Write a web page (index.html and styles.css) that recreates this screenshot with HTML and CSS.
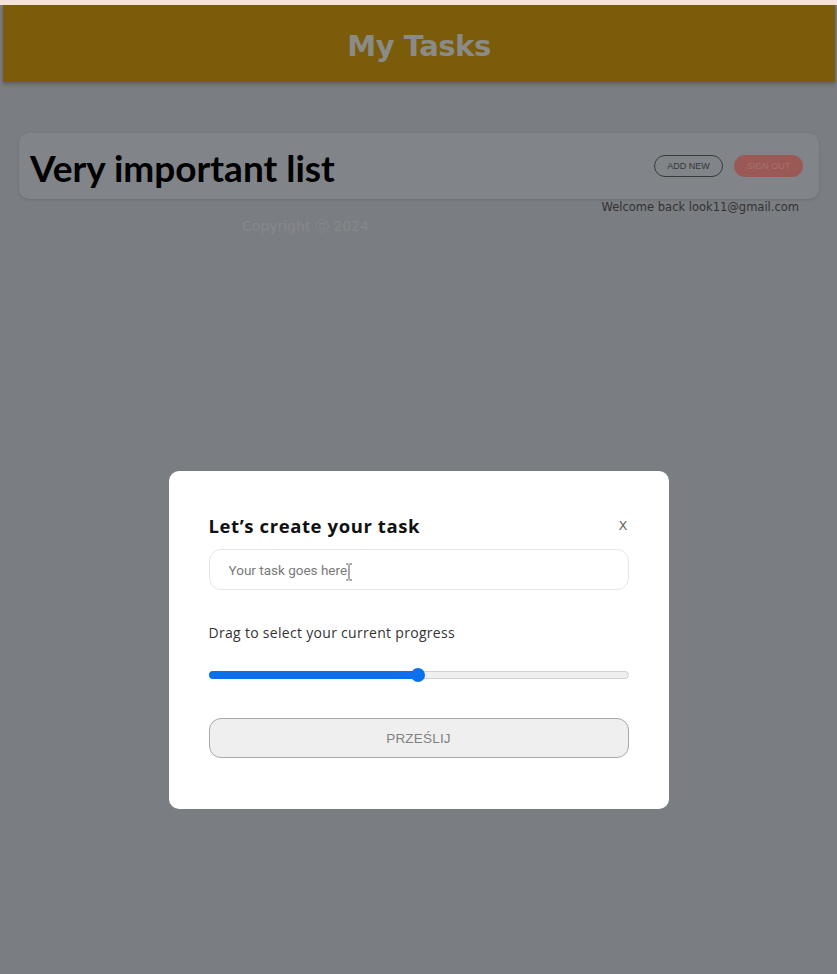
FILE: index.html
```html
<!DOCTYPE html>
<html lang="en">
<head>
<meta charset="utf-8">
<title>My Tasks</title>
<link rel="stylesheet" href="styles.css">
</head>
<body>
<div class="topline"></div>
<header class="app-header">
  <h1 class="app-title">My Tasks</h1>
</header>
<main class="page">
  <section class="list-card">
    <h2 class="list-title">Very important list</h2>
    <div class="list-actions">
      <button class="btn-outline">ADD NEW</button>
      <button class="btn-signout">SIGN OUT</button>
    </div>
  </section>
  <p class="welcome">Welcome back look11@gmail.com</p>
  <p class="copyright">Copyright ⓒ 2024</p>
</main>

<div class="backdrop">
  <div class="modal">
    <div class="modal-head">
      <h3 class="modal-title">Let’s create your task</h3>
      <span class="modal-close">X</span>
    </div>
    <div class="input-wrap">
      <input class="task-input" type="text" placeholder="Your task goes here">
      <svg class="ibeam" width="8" height="18" viewBox="0 0 8 18"><path d="M1 1h2.5M4.5 1H7M4 1.5v15M1 17h2.5M4.5 17H7" stroke="#555" stroke-width="1" fill="none"/></svg>
    </div>
    <p class="progress-label">Drag to select your current progress</p>
    <div class="slider">
      <div class="slider-fill" style="width:50%"><span class="slider-thumb"></span></div>
    </div>
    <button class="submit-btn">PRZEŚLIJ</button>
  </div>
</div>
</body>
</html>
```

FILE: styles.css
```css
* { box-sizing: border-box; }
html, body { margin: 0; padding: 0; }
body {
  background: #bcc0c8;
  font-family: "DejaVu Sans", sans-serif;
  height: 974px;
  overflow: hidden;
}
.topline {
  position: relative;
  z-index: 20;
  height: 5px;
  background: #f4e2d9;
}
.app-header {
  margin: 0 2px 0 3px;
  height: 77px;
  background: #bc8e11;
  display: flex;
  align-items: center;
  justify-content: center;
  box-shadow: 0 2px 4px rgba(0,0,0,0.25);
}
.app-title {
  margin: 0;
  font-family: "DejaVu Sans", sans-serif;
  font-weight: 700;
  font-size: 29px;
  color: #d4d4ce;
  padding-top: 4px;
  letter-spacing: -0.5px;
}
.page {
  padding-top: 51px;
}
.list-card {
  margin: 0 18px 0 19px;
  height: 66px;
  background: #c6cbd2;
  border-radius: 10px;
  box-shadow: 0 1px 3px rgba(0,0,0,0.12);
  display: flex;
  align-items: center;
  justify-content: space-between;
  padding: 0 16px 0 11px;
}
.list-title {
  margin: 0;
  font-family: Lato, sans-serif;
  font-weight: 700;
  font-size: 37px;
  color: #000;
  padding-top: 2px;
}
.list-actions {
  display: flex;
  gap: 11px;
  align-items: center;
}
.btn-outline, .btn-signout {
  width: 69px;
  height: 22px;
  border-radius: 11px;
  font-family: "Liberation Sans", Arial, sans-serif;
  font-size: 9px;
  padding: 0;
}
.btn-outline {
  background: transparent;
  border: 1px solid #5a5a5a;
  color: #555;
}
.btn-signout {
  background: #ee8984;
  border: none;
  color: #ffaca6;
}
.welcome {
  margin: 0;
  text-align: right;
  padding-right: 38px;
  font-size: 11.5px;
  color: #4e4e4e;
  line-height: 16px;
}
.copyright {
  margin: 2px 0 0 242px;
  font-size: 14px;
  color: #cdd1d7;
  line-height: 18px;
}

.backdrop {
  position: fixed;
  inset: 0;
  background: rgba(0,0,0,0.35);
  display: flex;
  justify-content: center;
  align-items: flex-start;
  padding-top: 471px;
  z-index: 10;
}
.modal {
  width: 500px;
  background: #fff;
  border-radius: 10px;
  padding: 40px 40px 51px;
}
.modal-head {
  display: flex;
  justify-content: space-between;
  align-items: center;
  height: 28px;
}
.modal-title {
  margin: 0;
  font-family: "Open Sans", sans-serif;
  font-weight: 700;
  font-size: 18.5px;
  letter-spacing: 0.6px;
  color: #111;
}
.modal-close {
  font-family: "DejaVu Sans", sans-serif;
  font-size: 13px;
  color: #666;
  margin-right: 1px;
}
.input-wrap {
  position: relative;
  margin-top: 10px;
}
.task-input {
  display: block;
  width: 420px;
  height: 41px;
  border: 1px solid #e6e6e6;
  border-radius: 12px;
  padding: 0 19px;
  font-family: Roboto, sans-serif;
  font-size: 13.5px;
  outline: none;
  background: #fff;
}
.task-input::placeholder { color: #7a7a7a; }
.ibeam {
  position: absolute;
  left: 136px;
  top: 14px;
}
.progress-label {
  margin: 33px 0 0;
  font-family: "Open Sans", sans-serif;
  font-size: 14px;
  letter-spacing: 0.3px;
  line-height: 20px;
  color: #333;
}
.slider {
  margin-top: 25px;
  height: 8px;
  position: relative;
  top: 3px;
  background: #efefef;
  border: 1px solid #d0d0d0;
  border-radius: 4px;
}
.slider-fill {
  position: relative;
  height: 8px;
  margin: -1px 0 0 -1px;
  background: #0b70f0;
  border-radius: 4px;
}
.slider-thumb {
  position: absolute;
  right: -7px;
  top: -3px;
  width: 14px;
  height: 14px;
  border-radius: 50%;
  background: #0b70f0;
}
.submit-btn {
  display: block;
  margin-top: 42px;
  width: 420px;
  height: 40px;
  background: #efefef;
  border: 1px solid #a8a8a8;
  border-radius: 12px;
  font-family: "Liberation Sans", Arial, sans-serif;
  font-size: 13.5px;
  color: #808080;
  letter-spacing: 0.2px;
}
```
